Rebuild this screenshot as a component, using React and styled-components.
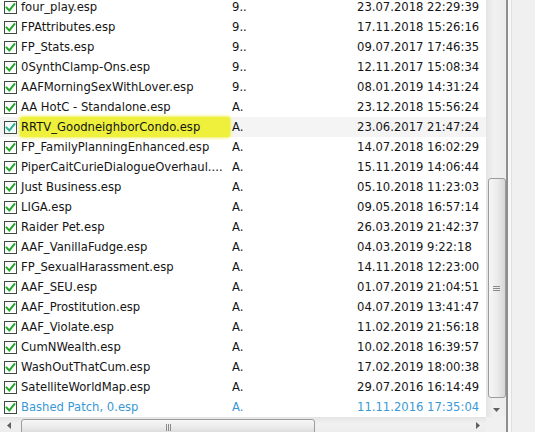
import React from 'react';
import styled, { createGlobalStyle } from 'styled-components';

const rowHeight = 20;

const plugins = [
  ['four_play.esp', '9..', '23.07.2018 22:29:39'],
  ['FPAttributes.esp', '9..', '17.11.2018 15:26:16'],
  ['FP_Stats.esp', '9..', '09.07.2017 17:46:35'],
  ['0SynthClamp-Ons.esp', '9..', '12.11.2017 15:08:34'],
  ['AAFMorningSexWithLover.esp', '9..', '08.01.2019 14:31:24'],
  ['AA HotC - Standalone.esp', 'A.', '23.12.2018 15:56:24'],
  ['RRTV_GoodneighborCondo.esp', 'A.', '23.06.2017 21:47:24', 'marked'],
  ['FP_FamilyPlanningEnhanced.esp', 'A.', '14.07.2018 16:02:29'],
  ['PiperCaitCurieDialogueOverhaul....', 'A.', '15.11.2019 14:06:44'],
  ['Just Business.esp', 'A.', '05.10.2018 11:23:03'],
  ['LIGA.esp', 'A.', '09.05.2018 16:57:14'],
  ['Raider Pet.esp', 'A.', '26.03.2019 21:42:37'],
  ['AAF_VanillaFudge.esp', 'A.', '04.03.2019 9:22:18'],
  ['FP_SexualHarassment.esp', 'A.', '14.11.2018 12:23:00'],
  ['AAF_SEU.esp', 'A.', '01.07.2019 21:04:51'],
  ['AAF_Prostitution.esp', 'A.', '04.07.2019 13:41:47'],
  ['AAF_Violate.esp', 'A.', '11.02.2019 21:56:18'],
  ['CumNWealth.esp', 'A.', '10.02.2018 16:39:57'],
  ['WashOutThatCum.esp', 'A.', '17.02.2019 18:00:38'],
  ['SatelliteWorldMap.esp', 'A.', '29.07.2016 16:14:49'],
  ['Bashed Patch, 0.esp', 'A.', '11.11.2016 17:35:04', 'patch'],
];

const GlobalStyle = createGlobalStyle`
  html, body {
    margin: 0;
    padding: 0;
    overflow: hidden;
    background: #f0f0f0;
  }
  body {
    font-family: "DejaVu Sans", "Liberation Sans", sans-serif;
  }
`;

const Window = styled.div`
  display: flex;
  width: 535px;
  height: 432px;
  overflow: hidden;
`;

const ListPane = styled.div`
  width: 506px;
  flex: none;
  display: grid;
  grid-template-columns: 1fr 20px;
  grid-template-rows: 1fr 17px;
  height: 434px;
  border-right: 2px solid #8e8e8e;
`;

const SidePanel = styled.div`
  flex: 1;
  background: #f0f0f0;
  border-left: 3px solid #f8f8f8;
  box-shadow: inset 1px 0 0 #e0e0e0;
`;

const RowsArea = styled.div`
  background: #fff;
  overflow: hidden;
`;

const Rows = styled.div`
  margin-top: -3px;
`;

const Row = styled.div`
  display: grid;
  grid-template-columns: 20px 212px 125px 1fr;
  align-items: center;
  height: ${rowHeight}px;
  font-size: 11.6px;
  color: ${(p) => (p.$patch ? '#3a98d6' : '#141414')};
  background: ${(p) => (p.$hover ? '#f4f4f4' : 'transparent')};
  white-space: nowrap;
`;

const CheckCell = styled.div`
  display: flex;
  align-items: center;
  padding-left: 4px;
`;

const NameCell = styled.div`
  overflow: hidden;
  height: 100%;
  display: flex;
  align-items: center;
  padding-left: 1px;
  margin-right: ${(p) => (p.$marked ? '2px' : '0')};
  background: ${(p) => (p.$marked ? '#eef03c' : 'transparent')};
  box-shadow: ${(p) => (p.$marked ? '0 0 3px 1px #f1f35a' : 'none')};
  border-radius: ${(p) => (p.$marked ? '3px' : '0')};
`;

const Cell = styled.div`
  overflow: hidden;
  padding-left: ${(p) => p.$pad || 0}px;
`;

const ScrollTrack = styled.div`
  display: flex;
  flex-direction: ${(p) => (p.$vertical ? 'column' : 'row')};
  align-items: center;
  background: ${(p) =>
    p.$vertical
      ? 'linear-gradient(to right, #e4e4e4, #f1f1f1 40%, #ececec)'
      : 'linear-gradient(to bottom, #e4e4e4, #f1f1f1 40%, #ececec)'};
  overflow: hidden;
`;

const Thumb = styled.div`
  flex: none;
  display: flex;
  align-items: center;
  justify-content: center;
  box-sizing: border-box;
  border: 1px solid #9c9c9c;
  border-radius: 3px;
  background: ${(p) =>
    p.$vertical
      ? 'linear-gradient(to right, #f6f6f6, #ececec 50%, #d6d6d6)'
      : 'linear-gradient(to bottom, #f6f6f6, #ececec 50%, #d6d6d6)'};
  ${(p) =>
    p.$vertical
      ? 'width: 18px; margin-left: 1px;'
      : 'height: 16px; margin-top: 2px; align-self: flex-start;'}
`;

const Grip = styled.div`
  display: flex;
  flex-direction: ${(p) => (p.$vertical ? 'column' : 'row')};
  gap: 1px;
  & > span {
    display: block;
    background: #8a8a8a;
    ${(p) => (p.$vertical ? 'width: 7px; height: 1px;' : 'width: 1px; height: 7px;')}
  }
`;

const ArrowButton = styled.div`
  flex: none;
  width: ${(p) => (p.$vertical ? '20px' : '17px')};
  height: ${(p) => (p.$vertical ? '17px' : '17px')};
  display: flex;
  align-items: center;
  justify-content: center;
`;

const Spacer = styled.div`
  flex: none;
`;

const Corner = styled.div`
  background: #f0f0f0;
`;

function CheckBox({ tint }) {
  return (
    <svg width="13" height="13" viewBox="0 0 13 13">
      <rect x="0.5" y="0.5" width="12" height="12" fill={tint ? '#f4fbfb' : '#fff'} stroke="#3e4a3e" />
      <path
        d="M2.6 6.6 L5.3 9.4 L10.4 3.2"
        fill="none"
        stroke={tint ? '#2fae8e' : '#22a62a'}
        strokeWidth="2"
        strokeLinecap="square"
      />
    </svg>
  );
}

function Arrow({ dir }) {
  const shapes = {
    down: '0,0 7,0 3.5,4',
    left: '4,0 4,7 0,3.5',
    right: '0,0 0,7 4,3.5',
  };
  const w = dir === 'down' ? 7 : 4;
  const h = dir === 'down' ? 4 : 7;
  return (
    <svg width={w} height={h} viewBox={`0 0 ${w} ${h}`}>
      <polygon points={shapes[dir]} fill="#606060" />
    </svg>
  );
}

function GripLines({ vertical }) {
  return (
    <Grip $vertical={vertical}>
      <span />
      <span />
      <span />
    </Grip>
  );
}

export default function App() {
  return (
    <>
      <GlobalStyle />
      <Window>
        <ListPane>
          <RowsArea>
            <Rows>
              {plugins.map(([name, version, date, flag]) => (
                <Row key={name} $patch={flag === 'patch'} $hover={flag === 'marked'}>
                  <CheckCell>
                    <CheckBox tint={flag === 'marked'} />
                  </CheckCell>
                  <NameCell $marked={flag === 'marked'}>{name}</NameCell>
                  <Cell>{version}</Cell>
                  <Cell>{date}</Cell>
                </Row>
              ))}
            </Rows>
          </RowsArea>

          <ScrollTrack $vertical>
            <Spacer style={{ height: 178 }} />
            <Thumb $vertical style={{ height: 220 }}>
              <GripLines vertical />
            </Thumb>
            <ArrowButton $vertical style={{ marginTop: 3 }}>
              <Arrow dir="down" />
            </ArrowButton>
          </ScrollTrack>

          <ScrollTrack>
            <ArrowButton>
              <Arrow dir="left" />
            </ArrowButton>
            <Spacer style={{ width: 4 }} />
            <Thumb style={{ width: 294 }}>
              <GripLines />
            </Thumb>
            <Spacer style={{ flex: 1 }} />
            <ArrowButton>
              <Arrow dir="right" />
            </ArrowButton>
          </ScrollTrack>

          <Corner />
        </ListPane>
        <SidePanel />
      </Window>
    </>
  );
}
